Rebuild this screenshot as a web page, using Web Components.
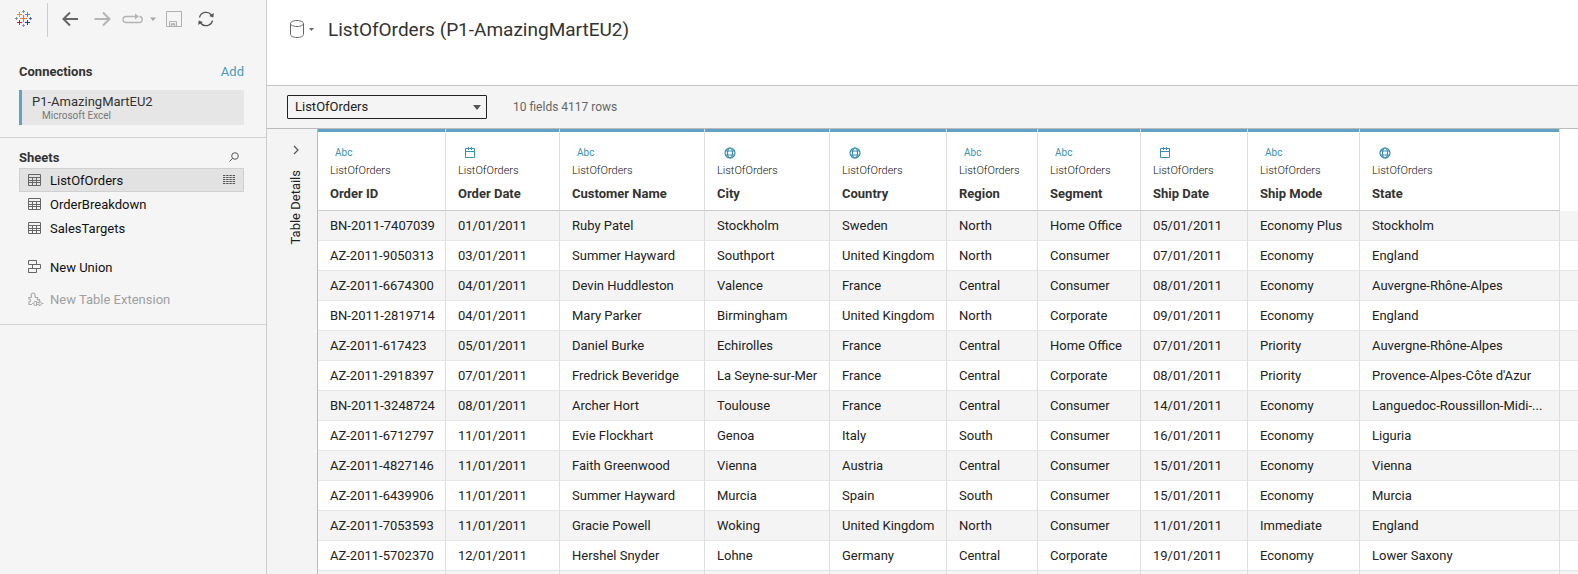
<!DOCTYPE html>
<html lang="en">
<head>
<meta charset="utf-8">
<title>ListOfOrders (P1-AmazingMartEU2)</title>
<style>
html,body{margin:0;height:100%;background:#fff}
body{font-family:Roboto,"Open Sans",sans-serif;color:#333;overflow:hidden}
</style>
</head>
<body>
<data-source-page></data-source-page>
<script>
const define = (name, html, setup) => customElements.define(name, class extends HTMLElement {
  connectedCallback() {
    if (this.shadowRoot) return;
    const root = this.attachShadow({ mode: 'open' });
    root.innerHTML = html;
    if (setup) setup(this, root);
  }
});

const reset = `*{box-sizing:border-box}
button{font:inherit;color:inherit;background:none;border:0;padding:0;margin:0;text-align:left;display:flex;align-items:center}
svg{display:block;flex:none}`;

const plus = (x, y, r, c, w = 1) => `<path d="M${x - r} ${y}h${2 * r}M${x} ${y - r}v${2 * r}" stroke="${c}" stroke-width="${w}"/>`;

const icons = {
  logo: [17, 17, plus(8.5,8.5,3.5,'#e8762c',1.2) + plus(4.5,4.5,2.5,'#eb912c') + plus(12.5,4.5,2.5,'#59879b') + plus(4.5,12.5,2.5,'#c72035') + plus(12.5,12.5,2.5,'#1f447e') + plus(8.5,1.5,1.5,'#7199a6') + plus(8.5,15.5,1.5,'#8a93bb') + plus(1.5,8.5,1.5,'#7199a6') + plus(15.5,8.5,1.5,'#5c6692')],
  back: [16, 16, '<path d="M16 8H1.500M8 1.500L1.500 8L8 14.500" stroke="#666" stroke-width="2" fill="none"/>'],
  forward: [18, 16, '<path d="M0.500 8h15M9 1.500L15.500 8l-6.500 6.500" stroke="#b4b4b4" stroke-width="2" fill="none"/>'],
  loop: [22, 12, '<path d="M14 3.500H4a3 3 0 0 0 0 6h13a3 3 0 0 0 0.500-6" stroke="#b4b4b4" stroke-width="1.300" fill="none"/><path d="M13 0.500l4 3L13 6.500z" fill="#b4b4b4"/>'],
  caret: [6, 4, '<path d="M0 0.500h6L3 4z" fill="#a5a5a5"/>'],
  caretDark: [5, 3, '<path d="M0 0h5L2.500 3z" fill="#666"/>'],
  save: [16, 16, '<path d="M0.500 0.500h15v15H0.500zM3.500 15.500v-5h7v5" stroke="#b0b0b0" fill="none"/><path d="M5.500 15.500v-2.500h3v2.500" stroke="#b0b0b0" stroke-width="1.400" fill="none"/>'],
  refresh: [18, 16, '<path d="M2.500 6.500A6.800 6.800 0 0 1 14.500 4M15.500 9.500A6.800 6.800 0 0 1 3.500 12" stroke="#555" stroke-width="1.300" fill="none"/><path d="M16.800 2l-0.500 4.500-4.200-1.500zM1.200 14l0.500-4.500 4.200 1.500z" fill="#555"/>'],
  search: [10, 10, '<circle cx="6" cy="4" r="3.300" stroke="#555" fill="none"/><path d="M3.600 6.300L0.500 9.500" stroke="#555"/>'],
  grid: [14, 12, '<path d="M0.500 0.500h12v11h-12zM0.500 3.500h12M0.500 6.500h12M0.500 8.500h12M4.500 3.500v8M8.500 3.500v8" stroke="#666" fill="none"/>'],
  rows: [12, 10, '<path d="M0 .5h12M0 2.500h12M0 4.500h12M0 6.500h12M0 8.500h12" stroke="#555" stroke-dasharray="2.400 0.800"/>'],
  union: [14, 14, '<path d="M0.500 0.500h8v4h-8zM4.500 4.500h8v4h-8zM0.500 8.500h8v4h-8z" stroke="#666" fill="none"/>'],
  extension: [16, 15, '<path d="M4 12.500H1V9.800q1.600-0.300 1.600-1.400T1 7V5.500h2.500M3.500 5.500Q2.500 1 5 1t2 4.500M7 5.500h2.500v2.200h2V9" stroke="#aaa" fill="none" stroke-width="1.200"/><path d="M8.500 9.500H6.500q-1.500 2 0 4h2zM4 11.500h1.300M8.500 10.500h2.200M8.500 12.500h2.200M11 9.500v4h1.500q2.500-2 0-4zM14 11.500h1.500" stroke="#aaa" fill="none"/>'],
  cylinder: [14, 18, '<path d="M0.500 3.500v11c0 1.700 2.900 3 6.500 3s6.500-1.300 6.500-3v-11M0.500 3.500c0 1.700 2.900 3 6.500 3s6.500-1.300 6.500-3s-2.900-3-6.500-3s-6.500 1.300-6.500 3z" stroke="#666" fill="none"/>'],
  chevron: [6, 10, '<path d="M1 1l4 4-4 4" stroke="#555" fill="none" stroke-width="1.200"/>'],
  date: [10, 11, '<path d="M0.500 1.500h9v9h-9zM0.500 4.500h9M3.500 0v3M6.500 0v3" stroke="#3b8fb0" fill="none"/>'],
  globe: [12, 12, '<g stroke="#3b8fb0" stroke-width="1.200" fill="none"><circle cx="6" cy="6" r="5"/><ellipse cx="6" cy="6" rx="2.500" ry="5"/><path d="M1 4h10M1 8h10"/></g>']
};
define('ui-icon', '<style>:host{display:block;flex:none}svg{display:block}</style>', (el, root) => {
  const [w, h, body] = icons[el.getAttribute('name')];
  root.innerHTML += `<svg width="${w}" height="${h}" viewBox="0 0 ${w} ${h}" aria-hidden="true">${body}</svg>`;
});

define('app-toolbar', `<style>${reset}
:host{display:flex;align-items:center;height:37px;padding-left:15px}
.rule{align-self:stretch;width:1px;margin:3px 14px 0 15px;background:#ccc}
button{height:24px}
</style>
<ui-icon name="logo"></ui-icon><span class="rule"></span>
<button aria-label="Back" style="width:32px"><ui-icon name="back"></ui-icon></button>
<button aria-label="Forward" style="width:28px"><ui-icon name="forward"></ui-icon></button>
<button aria-label="Replay" style="width:28px"><ui-icon name="loop"></ui-icon></button>
<button aria-label="Replay options" style="width:16px"><ui-icon name="caret"></ui-icon></button>
<button aria-label="Save" style="width:31px"><ui-icon name="save"></ui-icon></button>
<button aria-label="Refresh"><ui-icon name="refresh"></ui-icon></button>`);

define('connection-list', `<style>${reset}
:host{display:block;padding:22px 22px 12px 19px;border-bottom:1px solid #d4d4d4}
header{display:flex;justify-content:space-between;align-items:center;height:24px;font-size:13px}
h2{margin:0;font-size:13px;font-weight:700}
a{color:#4a9ab9;text-decoration:none}
button{width:100%;height:35px;margin-top:7px;padding-left:10px;border-left:3px solid #62a3c5;background:#e6e6e6;flex-direction:column;align-items:flex-start;justify-content:center}
b{font-weight:400;font-size:13px;line-height:16px}
small{font-size:10px;line-height:12px;color:#777;padding-left:10px}
</style>
<header><h2>Connections</h2><a href="#add">Add</a></header>
<button><b>P1-AmazingMartEU2</b><small>Microsoft Excel</small></button>`);

define('sheet-item', `<style>${reset}
:host{display:block}
button{width:100%;height:24px;padding:0 8px;border:1px solid transparent;font-size:13px;color:#111}
:host([selected]) button{background:#e2e2e2;border-color:#d0d0d0}
:host([disabled]) button{color:#a0a0a0}
.mark{width:22px}
.label{flex:1}
</style>
<button><span class="mark"></span><span class="label"><slot></slot></span></button>`, (el, root) => {
  root.querySelector('.mark').innerHTML = `<ui-icon name="${el.getAttribute('icon')}"></ui-icon>`;
  const b = root.querySelector('button');
  if (el.hasAttribute('selected')) b.insertAdjacentHTML('beforeend', '<ui-icon name="rows"></ui-icon>');
  b.disabled = el.hasAttribute('disabled');
});

define('sheet-list', `<style>${reset}
:host{display:block;padding:8px 22px 13px 19px;border-bottom:1px solid #d4d4d4}
header{display:flex;justify-content:space-between;align-items:center;height:22px;padding-right:5px}
h2{margin:0;font-size:13px;font-weight:700}
.union{margin-top:15px}.ext{margin-top:8px}
</style>
<header><h2>Sheets</h2><button aria-label="Search sheets"><ui-icon name="search"></ui-icon></button></header>
<sheet-item icon="grid" selected>ListOfOrders</sheet-item>
<sheet-item icon="grid">OrderBreakdown</sheet-item>
<sheet-item icon="grid">SalesTargets</sheet-item>
<sheet-item class="union" icon="union">New Union</sheet-item>
<sheet-item class="ext" icon="extension" disabled>New Table Extension</sheet-item>`);

define('source-header', `<style>${reset}
:host{display:flex;align-items:flex-start;height:86px;padding:10px 0 0 23px;border-bottom:1px solid #c4c4c4}
button{height:38px;gap:5px;width:38px}
h1{margin:0;font-size:19px;line-height:40px;font-weight:400}
</style>
<button aria-label="Data source"><ui-icon name="cylinder"></ui-icon><ui-icon name="caretDark"></ui-icon></button>
<h1>ListOfOrders (P1-AmazingMartEU2)</h1>`);

define('table-picker', `<style>${reset}
:host{display:flex;align-items:center;gap:26px;height:43px;padding-left:20px;background:#f4f4f4;border-bottom:1px solid #bbb;font-size:12px;color:#666}
label{position:relative;display:block}
select{appearance:none;display:block;width:200px;height:24px;padding:0 8px 1px 7px;border:1px solid #222;border-radius:1px;background:#f4f4f4;font:inherit;font-size:13px;color:#222}
label::after{content:"";position:absolute;right:6px;top:10px;border:4px solid transparent;border-top:5px solid #555;border-bottom:0;pointer-events:none}
</style>
<label><select aria-label="Table"><option>ListOfOrders</option></select></label><span>10 fields 4117 rows</span>`);

define('details-rail', `<style>${reset}
:host{display:block;flex:none;width:51px;background:#f4f4f4;border-right:1px solid #bbb}
button{width:100%;flex-direction:column;padding:16px 0 0 8px;gap:15px;font-size:13px;color:#222}
span{writing-mode:vertical-rl;transform:rotate(180deg);line-height:16px}
</style>
<button aria-label="Table Details"><ui-icon name="chevron"></ui-icon><span>Table Details</span></button>`);

const columns = [
  ['Order ID','abc',128],['Order Date','date',114],['Customer Name','abc',145],['City','globe',125],['Country','globe',117],
  ['Region','abc',91],['Segment','abc',103],['Ship Date','date',107],['Ship Mode','abc',112],['State','globe',200]];
const orders = `BN-2011-7407039|01/01/2011|Ruby Patel|Stockholm|Sweden|North|Home Office|05/01/2011|Economy Plus|Stockholm
AZ-2011-9050313|03/01/2011|Summer Hayward|Southport|United Kingdom|North|Consumer|07/01/2011|Economy|England
AZ-2011-6674300|04/01/2011|Devin Huddleston|Valence|France|Central|Consumer|08/01/2011|Economy|Auvergne-Rhône-Alpes
BN-2011-2819714|04/01/2011|Mary Parker|Birmingham|United Kingdom|North|Corporate|09/01/2011|Economy|England
AZ-2011-617423|05/01/2011|Daniel Burke|Echirolles|France|Central|Home Office|07/01/2011|Priority|Auvergne-Rhône-Alpes
AZ-2011-2918397|07/01/2011|Fredrick Beveridge|La Seyne-sur-Mer|France|Central|Corporate|08/01/2011|Priority|Provence-Alpes-Côte d'Azur
BN-2011-3248724|08/01/2011|Archer Hort|Toulouse|France|Central|Consumer|14/01/2011|Economy|Languedoc-Roussillon-Midi-...
AZ-2011-6712797|11/01/2011|Evie Flockhart|Genoa|Italy|South|Consumer|16/01/2011|Economy|Liguria
AZ-2011-4827146|11/01/2011|Faith Greenwood|Vienna|Austria|Central|Consumer|15/01/2011|Economy|Vienna
AZ-2011-6439906|11/01/2011|Summer Hayward|Murcia|Spain|South|Consumer|15/01/2011|Economy|Murcia
AZ-2011-7053593|11/01/2011|Gracie Powell|Woking|United Kingdom|North|Consumer|11/01/2011|Immediate|England
AZ-2011-5702370|12/01/2011|Hershel Snyder|Lohne|Germany|Central|Corporate|19/01/2011|Economy|Lower Saxony`.split('\n').map(r => r.split('|'));

define('order-table', `<style>${reset}
:host{display:block;flex:1;min-width:0;overflow:hidden;background:#fff}
table{width:100%;table-layout:fixed;border-collapse:separate;border-spacing:0}
th,td{padding:0 0 0 12px;text-align:left;white-space:nowrap;border-right:1px solid #ddd;font-size:13px}
th:last-child,td:last-child{border-right:0;padding:0}
th{height:82px;vertical-align:top;border-bottom:1px solid #ccc;font-weight:700}
th:last-child{border-bottom:0}
th:not(:last-child){background:linear-gradient(#62a3c5,#62a3c5) 0 0/100% 3px no-repeat padding-box}
.type{display:flex;align-items:center;height:15px;margin-top:16px;padding-left:5px;font-size:10px;font-weight:400;color:#3b8fb0}
.type ui-icon{margin-left:2px}
.source{display:block;font-size:11px;line-height:22px;font-weight:300;color:#111}
.name{display:block;line-height:24px}
td{height:30px;color:#222;border-bottom:1px solid #e6e6e6}
tbody tr:nth-child(odd) td{background:#f4f4f4}
</style>
<table><colgroup></colgroup><thead><tr></tr></thead><tbody></tbody></table>`, (el, root) => {
  root.querySelector('colgroup').innerHTML = columns.map(c => `<col style="width:${c[2]}px">`).join('') + '<col>';
  root.querySelector('thead tr').innerHTML = columns.map(([n, t]) => `<th scope="col"><span class="type">${t === 'abc' ? 'Abc' : `<ui-icon name="${t}"></ui-icon>`}</span><span class="source">ListOfOrders</span><span class="name">${n}</span></th>`).join('') + '<th></th>';
  root.querySelector('tbody').innerHTML = [...orders, columns.map(() => '')].map(r => `<tr>${r.map(v => `<td>${v}</td>`).join('')}<td></td></tr>`).join('');
});

define('data-source-page', `<style>${reset}
:host{display:flex;height:100vh;overflow:hidden}
aside{flex:none;width:267px;background:#f5f5f5;border-right:1px solid #ccc}
main{flex:1;min-width:0;display:flex;flex-direction:column}
.grid{flex:1;min-height:0;display:flex;overflow:hidden}
</style>
<aside><app-toolbar></app-toolbar><connection-list></connection-list><sheet-list></sheet-list></aside>
<main><source-header></source-header><table-picker></table-picker>
<div class="grid"><details-rail></details-rail><order-table></order-table></div></main>`);
</script>
</body>
</html>
